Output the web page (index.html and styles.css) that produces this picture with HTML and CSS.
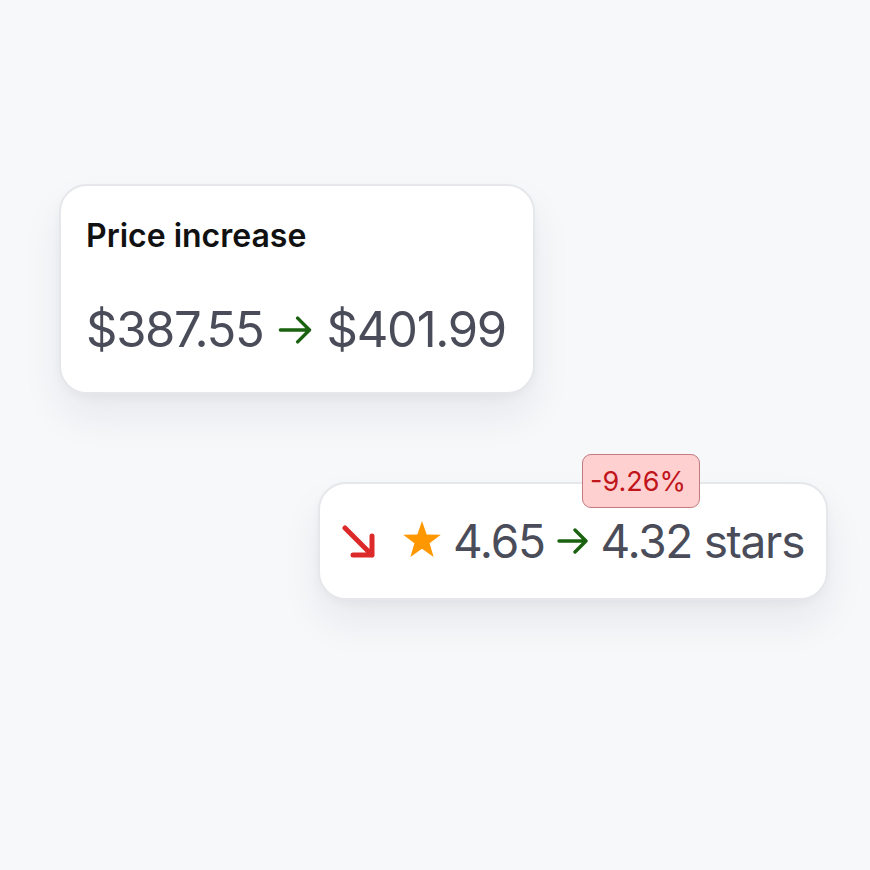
FILE: index.html
```html
<!DOCTYPE html>
<html>
<head>
<meta charset="utf-8">
<link rel="stylesheet" href="styles.css">
</head>
<body>
<main class="canvas">
  <section class="card card-price">
    <h2 class="title">Price increase</h2>
    <div class="change change-price">
      <span>$387.55</span>
      <svg class="arrow-right arrow-lg" viewBox="0 0 32 26"><path d="M2 13H29M18 2L29 13L18 24" fill="none" stroke="#1a620f" stroke-width="3.2" stroke-linecap="round" stroke-linejoin="round"/></svg>
      <span>$401.99</span>
    </div>
  </section>
  <section class="card card-rating">
    <span class="badge">-9.26%</span>
    <div class="change change-rating">
      <svg class="arrow-down" viewBox="0 0 36 34" width="36" height="34"><path d="M4 4L31 31M31 12V31H12" fill="none" stroke="#dc2a2a" stroke-width="5" stroke-linecap="round" stroke-linejoin="round"/></svg>
      <svg class="star" viewBox="0 0 40 38" width="40" height="38"><polygon points="20,1 24.7,14.4 38.8,14.7 27.6,23.3 31.6,36.9 20,28.8 8.4,36.9 12.4,23.3 1.2,14.7 15.3,14.4" fill="#ff9800"/></svg>
      <span>4.65</span>
      <svg class="arrow-right arrow-sm" viewBox="0 0 32 26"><path d="M2 13H29M18 2L29 13L18 24" fill="none" stroke="#1a620f" stroke-width="3.4" stroke-linecap="round" stroke-linejoin="round"/></svg>
      <span>4.32 stars</span>
    </div>
  </section>
</main>
</body>
</html>
```
FILE: styles.css
```css
* { box-sizing: border-box; }
html, body { margin: 0; padding: 0; }
body {
  background: #f7f8fa;
  font-family: "Inter", "Liberation Sans", sans-serif;
  width: 870px;
  height: 870px;
  overflow: hidden;
}
.canvas {
  display: flex;
  flex-direction: column;
  align-items: flex-start;
  padding: 184px 0 0 59px;
}
.card {
  position: relative;
  background: #ffffff;
  border: 2px solid #e6e7eb;
  border-radius: 28px;
  box-shadow: 0 22px 40px rgba(30, 35, 60, 0.07), 0 4px 10px rgba(30, 35, 60, 0.03);
}
.card-price {
  width: 476px;
  height: 210px;
  padding: 30px 25px 0;
}
.title {
  margin: 0;
  font-size: 32px;
  font-weight: 600;
  color: #111111;
  line-height: 40px;
  white-space: nowrap;
}
.change {
  display: flex;
  align-items: center;
  color: #4a4d59;
  white-space: nowrap;
  line-height: 56px;
}
.change-price {
  margin-top: 46px;
  gap: 14px;
  font-size: 49px;
  letter-spacing: -1.3px;
}
.change-rating {
  gap: 12px;
  font-size: 46px;
  letter-spacing: -1.3px;
}
.arrow-lg { width: 35px; height: 28px; }
.arrow-sm { width: 32px; height: 26px; }
.card-rating {
  margin: 88px 0 0 259px;
  width: 510px;
  height: 118px;
  padding: 0 21px;
  display: flex;
  align-items: center;
}
.arrow-down { margin-right: 13px; }
.star { margin-top: -4px; margin-right: -1px; }
.badge {
  position: absolute;
  top: -30px;
  left: 262px;
  width: 118px;
  height: 54px;
  display: flex;
  align-items: center;
  justify-content: center;
  padding-right: 6px;
  background: #ffd0d0;
  border: 1px solid #c47a80;
  border-radius: 9px;
  color: #c0151b;
  font-size: 27px;
  white-space: nowrap;
}
```
